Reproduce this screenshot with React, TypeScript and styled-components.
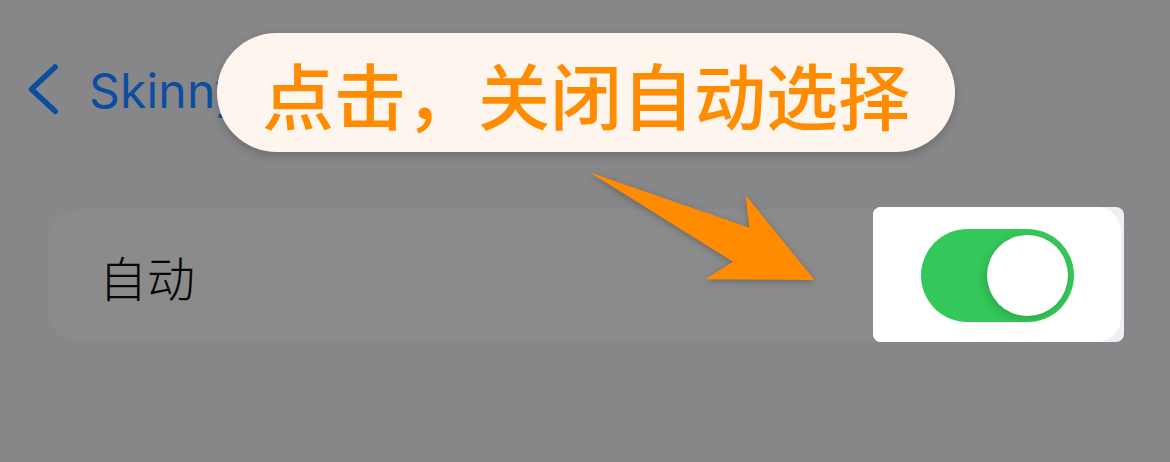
import styled, { createGlobalStyle } from "styled-components";

const GlobalStyle = createGlobalStyle`
  html, body {
    margin: 0;
    padding: 0;
    background: #87878a;
  }
  * {
    box-sizing: border-box;
  }
`;

const CJK = `"Noto Sans CJK SC", "Noto Sans", sans-serif`;

export default function App() {
  return (
    <>
      <GlobalStyle />
      <Screen>
        <NavBar>
          <BackChevron viewBox="0 0 40 60" aria-hidden>
            <path d="M32 3 L4 29 L32 55" />
          </BackChevron>
          <BackLabel>Skinny</BackLabel>
        </NavBar>

        <SettingRow>
          <RowLabel>自动</RowLabel>
          <Spotlight>
            <SpotlightInner>
              <Toggle $on>
                <Knob />
              </Toggle>
            </SpotlightInner>
          </Spotlight>
        </SettingRow>

        <Bubble>点击，关闭自动选择</Bubble>

        <Arrow viewBox="0 0 245 125" aria-hidden>
          <polygon points="9.5,7.3 169.4,62.7 165.6,30 234.5,115 125.4,114.3 153,96.7" />
        </Arrow>
      </Screen>
    </>
  );
}

const Screen = styled.div`
  position: relative;
  width: 1170px;
  height: 462px;
  overflow: hidden;
  background: #87878a;
  display: flex;
  flex-direction: column;
`;

const NavBar = styled.div`
  margin-top: 56px;
  height: 68px;
  padding-left: 28px;
  display: flex;
  align-items: center;
  gap: 27px;
`;

const BackChevron = styled.svg`
  width: 34px;
  height: 58px;
  fill: none;
  stroke: #0b4d9f;
  stroke-width: 6.5;
  stroke-linecap: round;
  stroke-linejoin: round;
`;

const BackLabel = styled.span`
  font-family: Inter, "Liberation Sans", sans-serif;
  font-size: 48px;
  color: #0b4d9f;
  letter-spacing: 0.2px;
`;

const SettingRow = styled.div`
  margin: 85px 46px 0 48px;
  height: 133px;
  border-radius: 30px;
  background: #8b8b8b;
  display: flex;
  align-items: center;
  justify-content: space-between;
`;

const RowLabel = styled.span`
  padding-left: 51px;
  font-family: ${CJK};
  font-size: 48px;
  font-weight: 300;
  color: #060606;
`;

const Spotlight = styled.div`
  align-self: stretch;
  margin-top: -2px;
  width: 251px;
  border-radius: 8px;
  background: #efeff4;
  padding-right: 3px;
  overflow: hidden;
  display: flex;
`;

const SpotlightInner = styled.div`
  flex: 1;
  background: #ffffff;
  border-radius: 0 24px 24px 0;
  display: flex;
  align-items: center;
  padding-left: 48px;
`;

const Toggle = styled.div<{ $on?: boolean }>`
  width: 153px;
  height: 93px;
  border-radius: 47px;
  background: ${(p) => (p.$on ? "#34c759" : "#e9e9ea")};
  display: flex;
  align-items: center;
  justify-content: ${(p) => (p.$on ? "flex-end" : "flex-start")};
  padding: 0 6px;
  margin-top: 2px;
`;

const Knob = styled.div`
  width: 81px;
  height: 81px;
  border-radius: 50%;
  background: #ffffff;
  box-shadow: -2px 3px 8px rgba(0, 0, 0, 0.16), 0 0 1px rgba(0, 0, 0, 0.08);
`;

const Bubble = styled.div`
  position: absolute;
  left: 217px;
  top: 33px;
  width: 738px;
  height: 119px;
  border-radius: 60px;
  background: #fff5ef;
  box-shadow: 0 4px 10px rgba(0, 0, 0, 0.18);
  display: flex;
  align-items: center;
  justify-content: center;
  font-family: ${CJK};
  font-size: 72px;
  font-weight: 500;
  color: #ff8c00;
  white-space: nowrap;
`;

const Arrow = styled.svg`
  position: absolute;
  left: 580px;
  top: 165px;
  width: 245px;
  height: 125px;
  fill: #ff8c00;
  overflow: visible;
  filter: drop-shadow(0 2px 3px rgba(0, 0, 0, 0.25));
`;
